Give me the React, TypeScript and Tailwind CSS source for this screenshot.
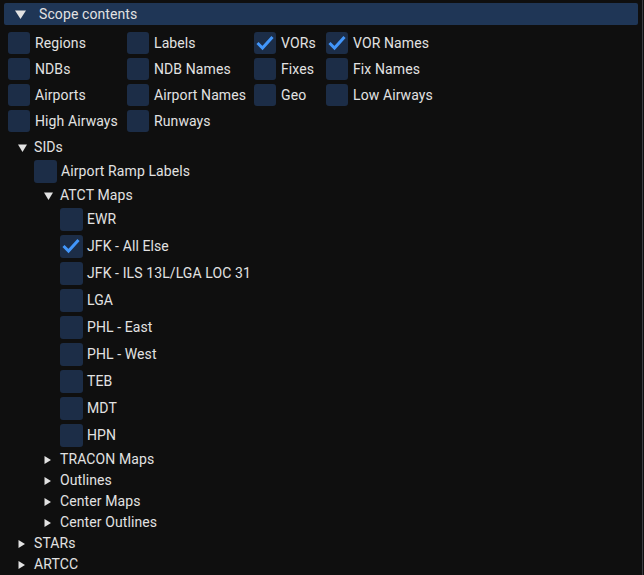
import React from "react";

const FONT = { fontFamily: "Roboto, 'Noto Sans', sans-serif" };

function CheckMark() {
  return (
    <svg width="22" height="22" viewBox="0 0 22 22" className="absolute left-0 top-0">
      <polyline
        points="3.5,11 8.5,16 18.5,5"
        fill="none"
        stroke="#4296fa"
        strokeWidth="3"
        strokeLinecap="butt"
        strokeLinejoin="miter"
      />
    </svg>
  );
}

function Checkbox({
  label,
  checked = false,
  size = 22,
  gap = 5,
}: {
  label: string;
  checked?: boolean;
  size?: number;
  gap?: number;
}) {
  const box = size === 23 ? "h-[23px] w-[23px]" : "h-[22px] w-[22px]";
  return (
    <div className={`flex items-center ${size === 23 ? "h-[23px]" : "h-[22px]"}`}>
      <div className={`relative shrink-0 rounded-[3px] bg-[#1c2d47] ${box}`}>
        {checked && <CheckMark />}
      </div>
      <span
        className={`whitespace-nowrap text-[14px] tracking-[0.1px] text-[#e2e2e2] ${gap === 4 ? "ml-[4px]" : "ml-[5px]"}`}
      >
        {label}
      </span>
    </div>
  );
}

function Arrow({ open }: { open: boolean }) {
  return open ? (
    <svg width="9" height="8" viewBox="0 0 9 8">
      <polygon points="0,0.5 9,0.5 4.5,8" fill="#e2e2e2" />
    </svg>
  ) : (
    <svg width="7" height="8" viewBox="0 0 7 8">
      <polygon points="0.5,0 7,4 0.5,8" fill="#e2e2e2" />
    </svg>
  );
}

function TreeNode({ label, open = false }: { label: string; open?: boolean }) {
  return (
    <div className="flex h-[17px] items-center">
      <div className="flex w-[17px] shrink-0 items-center pl-[1px]">
        <Arrow open={open} />
      </div>
      <span className="whitespace-nowrap text-[14px] tracking-[0.1px] text-[#e2e2e2]">{label}</span>
    </div>
  );
}

const grid: [string, boolean][][] = [
  [
    ["Regions", false],
    ["Labels", false],
    ["VORs", true],
    ["VOR Names", true],
  ],
  [
    ["NDBs", false],
    ["NDB Names", false],
    ["Fixes", false],
    ["Fix Names", false],
  ],
  [
    ["Airports", false],
    ["Airport Names", false],
    ["Geo", false],
    ["Low Airways", false],
  ],
  [
    ["High Airways", false],
    ["Runways", false],
  ],
];

const atct: [string, boolean][] = [
  ["EWR", false],
  ["JFK - All Else", true],
  ["JFK - ILS 13L/LGA LOC 31", false],
  ["LGA", false],
  ["PHL - East", false],
  ["PHL - West", false],
  ["TEB", false],
  ["MDT", false],
  ["HPN", false],
];

export default function App() {
  return (
    <div
      className="h-[575px] w-[644px] overflow-hidden bg-[#0f0f0f]"
      style={FONT}
    >
      <div className="flex h-full w-[643px] flex-col border-r border-[#3c3c42] pl-[4px] pt-[3px]">
        {/* Header */}
        <div className="flex h-[22px] w-[634px] shrink-0 items-center rounded-[2px] bg-[#1f3656]">
          <div className="ml-[11px] w-[24px]">
            <svg width="11" height="9" viewBox="0 0 11 9">
              <polygon points="0,0.5 11,0.5 5.5,9" fill="#e2e2e2" />
            </svg>
          </div>
          <span className="text-[14px] tracking-[0.1px] text-[#e2e2e2]">Scope contents</span>
        </div>

        {/* Top grid */}
        <div className="mt-[7px] ml-[4px] flex flex-col gap-[4px]">
          {grid.map((row, i) => (
            <div key={i} className="grid grid-cols-[119px_127px_72px_auto]">
              {row.map(([label, checked]) => (
                <Checkbox key={label} label={label} checked={checked} />
              ))}
            </div>
          ))}
        </div>

        {/* Tree */}
        <div className="mt-[7px] ml-[13px] flex flex-col gap-[4px]">
          <TreeNode label="SIDs" open />
          <div className="ml-[17px]">
            <Checkbox label="Airport Ramp Labels" size={23} gap={4} />
          </div>
          <div className="ml-[26px]">
            <TreeNode label="ATCT Maps" open />
          </div>
          {atct.map(([label, checked]) => (
            <div key={label} className="ml-[43px]">
              <Checkbox label={label} checked={checked} size={23} gap={4} />
            </div>
          ))}
          {["TRACON Maps", "Outlines", "Center Maps", "Center Outlines"].map((l) => (
            <div key={l} className="ml-[26px]">
              <TreeNode label={l} />
            </div>
          ))}
          <TreeNode label="STARs" />
          <TreeNode label="ARTCC" />
        </div>
      </div>
    </div>
  );
}
